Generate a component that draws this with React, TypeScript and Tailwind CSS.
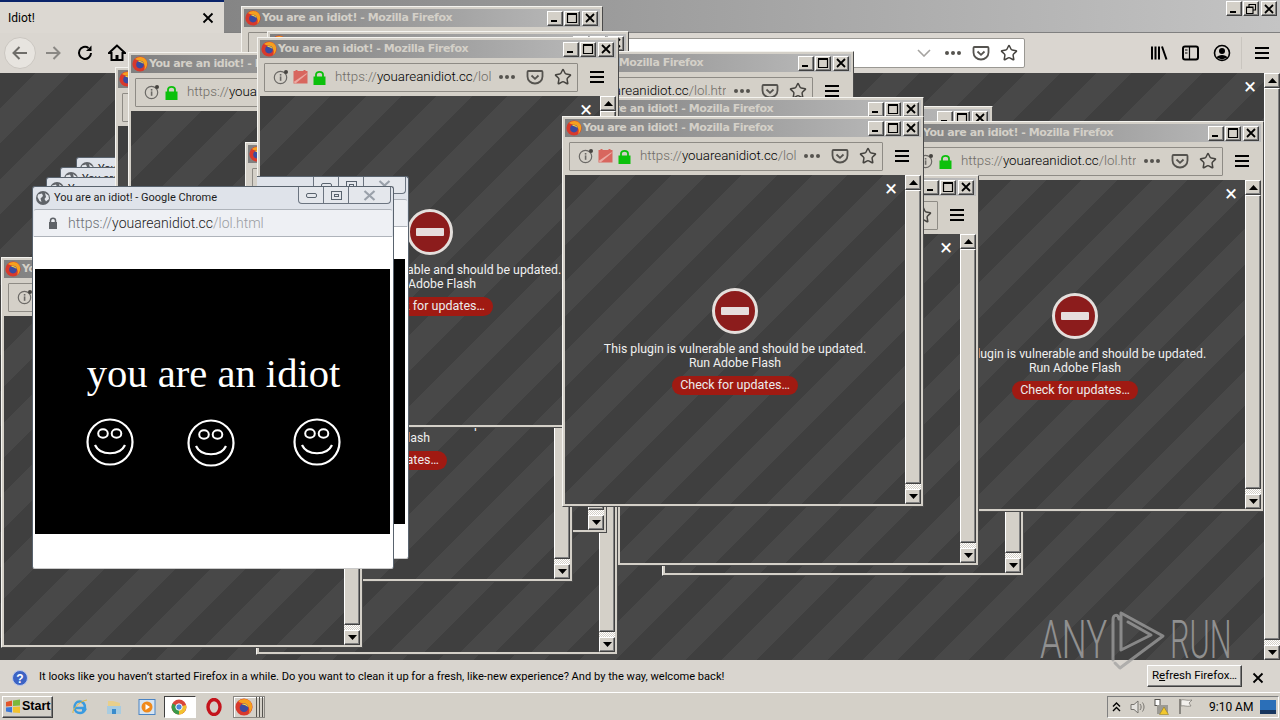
import { Star } from "lucide-react";

const stripes =
  "bg-[repeating-linear-gradient(135deg,#3f3f3f_0,#3f3f3f_25px,#484848_25px,#484848_50px)]";
const outset =
  "border border-t-white border-l-white border-r-[#404040] border-b-[#404040] bg-[#d4d0c8] shadow-[inset_-1px_-1px_0_#808080]";
const uiFont = "font-['Roboto','Open_Sans',sans-serif]";

function FirefoxIcon({ size = 16 }: { size?: number }) {
  return (
    <svg width={size} height={size} viewBox="0 0 16 16" className="shrink-0">
      <circle cx="8" cy="8" r="7.6" fill="#d8392c" />
      <path d="M3 3C6 0 12 0 14.5 4.5C16 8 15 12 12 14C14 10 12 6 8 5.5C6 4 4 4 3 3Z" fill="#f6a01e" />
      <circle cx="8" cy="8.6" r="3.8" fill="#3b4aa0" />
      <path d="M6 5.5C8 4.5 11 5.5 11.6 8C10.5 6.8 8 6 6 5.5Z" fill="#ffd43a" />
    </svg>
  );
}

function WinGlyph({ kind }: { kind: "min" | "max" | "close" | "restore" }) {
  return (
    <svg width="14" height="12" viewBox="0 0 14 12">
      {kind === "min" && <rect x="3" y="8" width="6" height="2" fill="#000" />}
      {kind === "max" && (
        <path d="M2.5 2.5H11.5V10.5H2.5Z M2 1.5H12" fill="none" stroke="#000" strokeWidth="1.2" />
      )}
      {kind === "close" && <path d="M3 2L11 10M11 2L3 10" stroke="#000" strokeWidth="1.8" />}
      {kind === "restore" && (
        <path d="M5 3.5V1.5H11.5V7H9M2.5 4H9V10.5H2.5Z M2.5 4.5H9" fill="none" stroke="#000" strokeWidth="1.1" />
      )}
    </svg>
  );
}

function WinButtons({ restore = false }: { restore?: boolean }) {
  return (
    <div className="flex gap-[1px]">
      <div className={`flex h-[15px] w-[16px] items-center justify-center ${outset}`}>
        <WinGlyph kind="min" />
      </div>
      <div className={`flex h-[15px] w-[16px] items-center justify-center ${outset}`}>
        <WinGlyph kind={restore ? "restore" : "max"} />
      </div>
      <div className={`ml-[1px] flex h-[15px] w-[16px] items-center justify-center ${outset}`}>
        <WinGlyph kind="close" />
      </div>
    </div>
  );
}

function Arrow({ down = false }: { down?: boolean }) {
  return (
    <div className={`flex h-[15px] w-[16px] shrink-0 items-center justify-center ${outset}`}>
      <svg width="9" height="5" viewBox="0 0 9 5">
        <path d={down ? "M0 0H9L4.5 5Z" : "M0 5H9L4.5 0Z"} fill="#000" />
      </svg>
    </div>
  );
}

function ScrollBar() {
  return (
    <div className="flex w-[16px] shrink-0 flex-col bg-[#d4d0c8]">
      <Arrow />
      <div className={`flex-1 ${outset}`} />
      <div className="h-[5px] shrink-0 bg-[repeating-conic-gradient(#ffffff_0_25%,#d4d0c8_0_50%)] bg-[length:2px_2px]" />
      <Arrow down />
    </div>
  );
}

function Pocket({ size = 18 }: { size?: number }) {
  return (
    <svg width={size} height={size} viewBox="0 0 18 18" className="shrink-0">
      <path
        d="M2.5 3H15.5C16 3 16.5 3.5 16.5 4V8.5C16.5 12.5 13 15.5 9 15.5C5 15.5 1.5 12.5 1.5 8.5V4C1.5 3.5 2 3 2.5 3Z"
        fill="none"
        stroke="#55534f"
        strokeWidth="1.8"
      />
      <path d="M5.5 7.5L9 10.8L12.5 7.5" fill="none" stroke="#55534f" strokeWidth="1.8" />
    </svg>
  );
}

function Dots() {
  return (
    <div className="flex shrink-0 gap-[2px]">
      <span className="h-[4px] w-[4px] rounded-full bg-[#55534f]" />
      <span className="h-[4px] w-[4px] rounded-full bg-[#55534f]" />
      <span className="h-[4px] w-[4px] rounded-full bg-[#55534f]" />
    </div>
  );
}

function MenuBars() {
  return (
    <div className="flex w-[14px] shrink-0 flex-col gap-[3px]">
      <span className="h-[2px] bg-black" />
      <span className="h-[2px] bg-black" />
      <span className="h-[2px] bg-black" />
    </div>
  );
}

function InfoIcon() {
  return (
    <svg width="16" height="16" viewBox="0 0 16 16" className="shrink-0">
      <circle cx="7.5" cy="8.5" r="6.2" fill="none" stroke="#6b6966" strokeWidth="1.2" />
      <rect x="6.8" y="7.4" width="1.6" height="4.4" fill="#6b6966" />
      <rect x="6.8" y="5" width="1.6" height="1.6" fill="#6b6966" />
      <circle cx="13" cy="3" r="2" fill="#45433f" />
    </svg>
  );
}

function TrackIcon() {
  return (
    <svg width="15" height="14" viewBox="0 0 15 14" className="shrink-0">
      <rect x="0.5" y="1" width="14" height="12.5" fill="#d8665e" />
      <path d="M0.5 12L13 3.5H14.5L2.5 13.5" fill="#eaa9a2" />
      <rect x="2.5" y="0" width="2" height="2" fill="#d8665e" />
      <rect x="10.5" y="0" width="2" height="2" fill="#d8665e" />
    </svg>
  );
}

function GreenLock() {
  return (
    <svg width="13" height="15" viewBox="0 0 13 15" className="shrink-0">
      <path d="M3 7V4.5C3 1 10 1 10 4.5V7" fill="none" stroke="#0cc00c" strokeWidth="1.8" />
      <rect x="0.5" y="6.5" width="12" height="8.5" fill="#0cc00c" />
    </svg>
  );
}

function UrlText({ end = "/lol.html" }: { end?: string }) {
  return (
    <span className="whitespace-nowrap">
      <span className="text-[#6f6c67]">https://</span>
      <span className="text-black">youareanidiot.cc</span>
      <span className="text-[#6f6c67]">{end}</span>
    </span>
  );
}

function FirefoxWindow({ className, tracker = false }: { className: string; tracker?: boolean }) {
  return (
    <div
      className={`absolute flex h-[391px] w-[362px] flex-col border border-t-[#f4f3ef] border-l-[#f4f3ef] border-r-[#4a4a4a] border-b-[#4a4a4a] bg-[#d4d0c8] p-[2px] ${className}`}
    >
      <div className="flex h-[18px] shrink-0 items-center bg-gradient-to-r from-[#808080] to-[#bdbdbd] pl-[1px] pr-[2px]">
        <FirefoxIcon />
        <span className="ml-[1px] font-['DejaVu_Sans',sans-serif] text-[11px] font-bold tracking-[-0.45px] whitespace-nowrap text-[#d4d0c8]">
          You are an idiot! - Mozilla Firefox
        </span>
        <div className="ml-auto">
          <WinButtons />
        </div>
      </div>
      <div className="flex h-[38px] shrink-0 items-center bg-[#d4d0c8] pl-[4px]">
        <div className="flex h-[29px] w-[314px] items-center rounded-[1px] border border-[#8e8b85] pl-[8px] pr-[5px]">
          <InfoIcon />
          {tracker && (
            <div className="ml-[4px]">
              <TrackIcon />
            </div>
          )}
          <div className="ml-[5px]">
            <GreenLock />
          </div>
          <div className={`ml-[9px] min-w-0 flex-1 overflow-hidden text-[13.3px] font-light ${uiFont}`}>
            <UrlText />
          </div>
          <div className="ml-[8px]">
            <Dots />
          </div>
          <div className="ml-[11px]">
            <Pocket />
          </div>
          <Star size={18} strokeWidth={2} className="ml-[10px] shrink-0 text-[#45433f]" />
        </div>
        <div className="ml-[12px]">
          <MenuBars />
        </div>
      </div>
      <div className="flex min-h-0 flex-1">
        <div className={`relative flex min-w-0 flex-1 flex-col items-center pt-[113px] ${stripes}`}>
          <span className="absolute top-[3px] right-[8px] text-[22px] leading-none text-white">×</span>
          <div className="flex h-[46px] w-[46px] items-center justify-center rounded-full border-[3px] border-[#e4dfdc] bg-[#8c1c1c]">
            <div className="h-[8px] w-[28px] rounded-[1px] bg-[#e6dcdc]" />
          </div>
          <div className={`mt-[8px] text-center text-[12.3px] leading-[14px] whitespace-nowrap text-[#f0f0f0] ${uiFont}`}>
            <div>This plugin is vulnerable and should be updated.</div>
            <div>Run Adobe Flash</div>
          </div>
          <div
            className={`mt-[6px] flex h-[19px] w-[126px] items-center justify-center rounded-full bg-[#a01a12] text-[12.5px] text-[#ececec] ${uiFont}`}
          >
            Check for updates…
          </div>
        </div>
        <ScrollBar />
      </div>
    </div>
  );
}

function GlobeIcon() {
  return (
    <svg width="14" height="14" viewBox="0 0 14 14" className="shrink-0">
      <circle cx="7" cy="7" r="7" fill="#5f6368" />
      <path d="M2 3.5L6 2.5L7 5L4.5 7.5L5.5 11L3.5 10L1.5 6Z M9 2L12.5 4.5L13 8L10 10.5L8.5 8L10 6Z" fill="#e2e5ea" />
    </svg>
  );
}

function Smiley({ className }: { className: string }) {
  return (
    <svg width="48" height="48" viewBox="0 0 48 48" className={className}>
      <circle cx="24" cy="24" r="22.5" fill="none" stroke="#fff" strokeWidth="2.2" />
      <ellipse cx="17" cy="15.5" rx="4.8" ry="4.2" fill="none" stroke="#fff" strokeWidth="2" />
      <ellipse cx="30.5" cy="15.5" rx="4.8" ry="4.2" fill="none" stroke="#fff" strokeWidth="2" />
      <path d="M9 27C14 38 34 38 39 27" fill="none" stroke="#fff" strokeWidth="2.2" />
    </svg>
  );
}

function ChromeWindow({ className }: { className: string }) {
  return (
    <div
      className={`absolute flex h-[383px] w-[362px] flex-col overflow-hidden rounded-[3px] border border-[#59636e] border-b-[#c9c9c9] bg-[#dfe3ea] ${className}`}
    >
      <div className="flex h-[22px] shrink-0 items-start pl-[3px]">
        <div className="mt-[4px]">
          <GlobeIcon />
        </div>
        <span className={`mt-[3px] ml-[4px] text-[11px] whitespace-nowrap text-[#1c1c1c] ${uiFont}`}>
          You are an idiot! - Google Chrome
        </span>
        <div className="mr-[2px] ml-auto flex h-[17px] rounded-b-[4px] border border-t-0 border-[#6b7480] bg-[#e4e7ec]">
          <div className="flex w-[25px] items-center justify-center border-r border-[#6b7480]">
            <span className="h-[5px] w-[11px] rounded-[2px] border border-[#59636e]" />
          </div>
          <div className="flex w-[25px] items-center justify-center border-r border-[#6b7480]">
            <span className="flex h-[9px] w-[11px] items-center justify-center border border-[#59636e]">
              <span className="h-[3px] w-[5px] border border-[#59636e]" />
            </span>
          </div>
          <div className="flex w-[41px] items-center justify-center">
            <svg width="13" height="11" viewBox="0 0 13 11">
              <path d="M1.5 1L11.5 10M11.5 1L1.5 10" stroke="#9aa1aa" strokeWidth="2.2" fill="none" />
            </svg>
          </div>
        </div>
      </div>
      <div className="mx-[1px] flex h-[28px] shrink-0 items-center rounded-t-[2px] border-y border-[#aeb3ba] bg-[#eef0f4] pl-[14px]">
        <svg width="10" height="12" viewBox="0 0 10 12" className="shrink-0">
          <path d="M2.5 6V3.5C2.5 0.5 7.5 0.5 7.5 3.5V6" fill="none" stroke="#5f6368" strokeWidth="1.5" />
          <rect x="1" y="5" width="8" height="7" fill="#5f6368" />
        </svg>
        <span className={`ml-[10px] whitespace-nowrap text-[14px] font-light ${uiFont}`}>
          <span className="text-[#6d7177]">https://</span>
          <span className="text-[#1c1c1c]">youareanidiot.cc</span>
          <span className="text-[#9a9da2]">/lol.html</span>
        </span>
      </div>
      <div className="flex min-h-0 flex-1 flex-col bg-white pt-[32px] pr-[3px] pb-[34px] pl-[2px]">
        <div className="flex min-h-0 flex-1 flex-col items-center bg-black">
          <div className="mt-[81px] pl-[2px] font-['Liberation_Serif',serif] text-[40.6px] leading-[48px] text-white">you are an idiot</div>
          <div className="relative mt-[20px] h-[48px] w-full">
            <Smiley className="absolute top-0 left-[51px]" />
            <Smiley className="absolute top-[1px] left-[152px]" />
            <Smiley className="absolute top-0 left-[258px]" />
          </div>
        </div>
      </div>
    </div>
  );
}

function QuickIcon({ children, className = "" }: { children: React.ReactNode; className?: string }) {
  return <div className={`flex h-[21px] items-center justify-center ${className}`}>{children}</div>;
}

export default function App() {
  return (
    <div className={`relative flex h-[720px] w-[1280px] flex-col overflow-hidden bg-[#d4d0c8] ${uiFont}`}>
      {/* main browser window */}
      <div className="flex h-[33px] shrink-0">
        <div className="flex w-[224px] items-center justify-between border-t-2 border-[#0a246a] bg-[#dcd8d2] pr-[10px] pl-[8px]">
          <span className="text-[12px] text-black">Idiot!</span>
          <svg width="12" height="12" viewBox="0 0 12 12">
            <path d="M1.5 1.5L10.5 10.5M10.5 1.5L1.5 10.5" stroke="#000" strokeWidth="1.8" />
          </svg>
        </div>
        <div className="flex flex-1 items-start justify-end border-b border-[#808080] bg-gradient-to-r from-[#858585] to-[#c4c4c4] pt-[1px] pr-[3px]">
          <WinButtons restore />
        </div>
      </div>
      <div className="flex h-[40px] shrink-0 items-center bg-[#dad6d0] pl-[4px]">
        <div className="flex h-[32px] w-[32px] items-center justify-center rounded-full border border-[#cbc7c1] bg-[#e7e4df]">
          <svg width="18" height="16" viewBox="0 0 18 16">
            <path d="M16 8H3M8.5 2L2.5 8L8.5 14" fill="none" stroke="#6f6d69" strokeWidth="2" />
          </svg>
        </div>
        <svg width="18" height="16" viewBox="0 0 18 16" className="ml-[8px]">
          <path d="M2 8H15M9.5 2L15.5 8L9.5 14" fill="none" stroke="#8a8884" strokeWidth="2" />
        </svg>
        <svg width="18" height="18" viewBox="0 0 18 18" className="ml-[14px]">
          <path d="M15 9A6 6 0 1 1 12.5 4" fill="none" stroke="#000" strokeWidth="2" />
          <path d="M15.5 1.5V7H10Z" fill="#000" />
        </svg>
        <svg width="18" height="18" viewBox="0 0 18 18" className="ml-[14px]">
          <path d="M9 1.5L1 9H3.5V16H14.5V9H17Z" fill="none" stroke="#000" strokeWidth="2" />
          <rect x="7.5" y="11" width="3" height="5" fill="#000" />
        </svg>
        <div className="ml-[125px] flex h-[30px] w-[774px] items-center justify-end rounded-[2px] border border-[#9a9893] bg-white pr-[6px]">
          <svg width="14" height="8" viewBox="0 0 14 8">
            <path d="M1 1L7 7L13 1" fill="none" stroke="#a5a3a0" strokeWidth="1.6" />
          </svg>
          <div className="ml-[14px]">
            <Dots />
          </div>
          <div className="ml-[11px]">
            <Pocket />
          </div>
          <Star size={18} strokeWidth={2} className="ml-[10px] text-[#45433f]" />
        </div>
        <div className="ml-[125px] flex items-center">
          <svg width="18" height="16" viewBox="0 0 18 16">
            <path d="M2 1.5V14.5M5.5 1.5V14.5M9 1.5V14.5M12 1.5L16.5 14.5" stroke="#000" strokeWidth="2" fill="none" />
          </svg>
          <svg width="18" height="16" viewBox="0 0 18 16" className="ml-[14px]">
            <rect x="1" y="1.5" width="15" height="13" rx="2" fill="none" stroke="#000" strokeWidth="2" />
            <path d="M7.5 2V14M3 5H5.5M3 8H5.5" stroke="#000" strokeWidth="1.2" />
          </svg>
          <svg width="18" height="18" viewBox="0 0 18 18" className="ml-[13px]">
            <circle cx="9" cy="9" r="7.5" fill="none" stroke="#000" strokeWidth="1.6" />
            <circle cx="9" cy="7" r="3" fill="#000" />
            <path d="M3.5 13.5C5 10 13 10 14.5 13.5L9 15.5Z" fill="#000" />
          </svg>
          <div className="ml-[10px] h-[32px] w-[1px] bg-[#c9c5bf]" />
          <div className="ml-[13px]">
            <MenuBars />
          </div>
        </div>
      </div>
      <div className={`relative flex min-h-0 flex-1 ${stripes}`}>
        <div className="relative flex-1">
          <span className="absolute top-[3px] right-[8px] text-[22px] leading-none text-white">×</span>
        </div>
        <ScrollBar />
      </div>

      {/* notification bar */}
      <div className="flex h-[33px] shrink-0 items-center border-b border-white bg-[#d9d5cf] pt-[3px] pl-[12px]">
        <svg width="16" height="16" viewBox="0 0 16 16">
          <circle cx="8" cy="8" r="7.5" fill="#3c63c4" stroke="#b9c7ea" />
          <text x="8" y="12.5" textAnchor="middle" fontSize="12" fontWeight="700" fill="#fff" fontFamily="Liberation Sans">?</text>
        </svg>
        <span className="ml-[11px] text-[11.1px] whitespace-nowrap text-black">
          It looks like you haven’t started Firefox in a while. Do you want to clean it up for a fresh, like-new experience? And by the way, welcome back!
        </span>
        <div className={`mb-[3px] ml-auto flex h-[22px] w-[95px] items-center justify-center text-[11.5px] ${outset} bg-[#e0ddd7]`}>
          <span>
            R<span className="underline">e</span>fresh Firefox…
          </span>
        </div>
        <svg width="12" height="12" viewBox="0 0 12 12" className="mr-[16px] ml-[10px]">
          <path d="M1.5 1.5L10.5 10.5M10.5 1.5L1.5 10.5" stroke="#000" strokeWidth="1.8" />
        </svg>
      </div>

      {/* taskbar */}
      <div className="flex h-[27px] shrink-0 items-center bg-[#d4d0c8] pl-[2px]">
        <div className={`flex h-[22px] w-[51px] items-center pl-[2px] ${outset}`}>
          <svg width="16" height="15" viewBox="0 0 16 15">
            <path d="M1 3L7 1.5V7L1 7.5Z" fill="#e2562b" />
            <path d="M8 1.5L15 0.5V6.5L8 7Z" fill="#7cb83c" />
            <path d="M1 8.5L7 8V13.5L1 12.5Z" fill="#3c78d8" />
            <path d="M8 8L15 7.5V14L8 13.5Z" fill="#f2c22e" />
          </svg>
          <span className="ml-[1px] font-['Liberation_Sans',sans-serif] text-[12.5px] font-bold text-black">Start</span>
        </div>
        <QuickIcon className="ml-[18px] w-[18px]">
          <svg width="18" height="18" viewBox="0 0 18 18">
            <path d="M4 10H14C14 5 11 3.5 8.5 3.5C5.5 3.5 3.5 6 3.5 9.5C3.5 13 6 15 9 15C11 15 13 14 14 12H11" fill="none" stroke="#3a9be0" strokeWidth="2.4" />
            <path d="M2 15C1 12 8 3 16 2" fill="none" stroke="#e0b83c" strokeWidth="1" />
          </svg>
        </QuickIcon>
        <QuickIcon className="ml-[16px] w-[18px]">
          <svg width="18" height="18" viewBox="0 0 18 18">
            <path d="M3 3H8L15 5V15H3Z" fill="#e8cf8a" />
            <rect x="2" y="8" width="14" height="8" fill="#a8cce0" />
            <rect x="7" y="11" width="4" height="5" fill="#3a8ccc" />
          </svg>
        </QuickIcon>
        <QuickIcon className="ml-[15px] w-[18px]">
          <svg width="18" height="18" viewBox="0 0 18 18">
            <rect x="1" y="1.5" width="16" height="15" fill="#d6e4f2" stroke="#4a84c4" />
            <circle cx="9" cy="9" r="5.5" fill="#f08a1c" />
            <path d="M7.5 6L12 9L7.5 12Z" fill="#fff" />
          </svg>
        </QuickIcon>
        <div className="ml-[8px] flex h-[22px] w-[32px] items-center justify-center border border-t-[#404040] border-l-[#404040] border-r-white border-b-white bg-white pr-[2px]">
          <svg width="16" height="16" viewBox="0 0 16 16">
            <circle cx="8" cy="8" r="7.5" fill="#d9463a" />
            <path d="M8 8L15 6A7.5 7.5 0 0 1 8 15.5Z" fill="#f2c230" />
            <path d="M8 8L8 15.5A7.5 7.5 0 0 1 1.5 4.5Z" fill="#3a9a4a" />
            <circle cx="8" cy="8" r="3.2" fill="#4a86dc" stroke="#fff" />
          </svg>
        </div>
        <QuickIcon className="ml-[9px] w-[18px]">
          <svg width="16" height="18" viewBox="0 0 16 18">
            <ellipse cx="8" cy="9" rx="6" ry="7.5" fill="none" stroke="#c4141c" strokeWidth="3.4" />
          </svg>
        </QuickIcon>
        <div className="ml-[10px] flex h-[22px] w-[32px] items-center border border-[#8a8782] bg-[#d4d0c8] pl-[1px] shadow-[inset_1px_1px_0_#fff]">
          <FirefoxIcon size={18} />
          <span className="ml-[3px] h-[20px] w-[1px] bg-[#55534f]" />
          <span className="ml-[2px] h-[20px] w-[1px] bg-[#55534f]" />
          <span className="ml-[2px] h-[20px] w-[1px] bg-[#55534f]" />
        </div>
        <div className="mr-[1px] ml-auto flex h-[22px] w-[172px] items-center border border-t-[#808080] border-l-[#808080] border-r-white border-b-white pl-[3px] text-[12px] text-black">
          <svg width="9" height="10" viewBox="0 0 9 10" className="ml-[1px] shrink-0">
            <path d="M1 4.5L4.5 1L8 4.5M1 9L4.5 5.5L8 9" fill="none" stroke="#000" strokeWidth="1.4" />
          </svg>
          <svg width="16" height="16" viewBox="0 0 16 16" className="ml-[9px] shrink-0">
            <path d="M1 5.5H4L8 2V14L4 10.5H1Z" fill="#e4e2de" stroke="#77746f" />
            <path d="M10 5C11.5 7 11.5 9 10 11M12.5 3.5C14.5 6.5 14.5 9.5 12.5 12.5" fill="none" stroke="#77746f" />
          </svg>
          <svg width="15" height="16" viewBox="0 0 15 16" className="ml-[8px] shrink-0">
            <rect x="1" y="0.5" width="5" height="6" fill="#fff" stroke="#55534f" />
            <rect x="3" y="6" width="11" height="9" fill="#9c9a94" />
            <path d="M10 8L14.5 15.5H5.5Z" fill="#f2c82e" stroke="#8a7414" strokeWidth="0.5" />
          </svg>
          <svg width="15" height="17" viewBox="0 0 15 17" className="ml-[9px] shrink-0">
            <path d="M2 1V16" stroke="#77746f" strokeWidth="1.6" />
            <path d="M3 2C6 1 8 3 14 2L11 5L13 8C8 9 6 7 3 8Z" fill="#f2f0ec" stroke="#77746f" strokeWidth="0.7" />
          </svg>
          <span className="ml-[16px] whitespace-nowrap">9:10 AM</span>
          <svg width="16" height="14" viewBox="0 0 16 14" className="mr-[2px] ml-auto shrink-0">
            <rect width="16" height="14" fill="#2b6fb8" />
            <rect y="10" width="16" height="4" fill="#17365e" />
          </svg>
        </div>
      </div>

      {/* pile of popup windows on the desktop */}
      <FirefoxWindow className="top-[6px] left-[241px]" />
      <FirefoxWindow className="top-[31px] left-[267px]" />
      <FirefoxWindow className="top-[51px] left-[492px]" />
      <FirefoxWindow className="top-[106px] left-[631px]" />
      <FirefoxWindow className="top-[185px] left-[662px]" />
      <FirefoxWindow className="top-[121px] left-[902px]" />
      <FirefoxWindow className="top-[175px] left-[617px]" />
      <FirefoxWindow className="top-[97px] left-[562px]" />
      <FirefoxWindow className="top-[264px] left-[256px]" />
      <ChromeWindow className="top-[157px] left-[76px]" />
      <ChromeWindow className="top-[167px] left-[60px]" />
      <ChromeWindow className="top-[177px] left-[46px]" />
      <FirefoxWindow className="top-[67px] left-[115px]" />
      <FirefoxWindow className="top-[52px] left-[128px]" />
      <FirefoxWindow className="top-[142px] left-[245px]" />
      <FirefoxWindow className="top-[191px] left-[211px]" />
      <FirefoxWindow className="top-[257px] left-[1px]" />
      <FirefoxWindow className="top-[37px] left-[257px]" tracker />
      <FirefoxWindow className="top-[116px] left-[562px]" tracker />
      <ChromeWindow className="top-[176px] left-[47px] [clip-path:inset(0_0_0_210px)]" />
      <ChromeWindow className="top-[186px] left-[32px]" />

      {/* watermark */}
      <div className="pointer-events-none absolute top-[608px] left-[1040px] flex h-[64px] items-center font-['Roboto',sans-serif] text-[53px] leading-none font-light text-[#909090]">
        <span className="w-[66px] origin-left scale-x-[0.66] whitespace-nowrap">ANY</span>
        <svg width="64" height="64" viewBox="0 0 64 64" className="shrink-0">
          <path
            d="M7 52V12C7 6 12 6 13 11M15 5L57 28L14 60L9 55M15 5V42L45 27L22 14"
            fill="none"
            stroke="#a0a0a0"
            strokeOpacity="0.75"
            strokeWidth="3"
            strokeLinecap="round"
            strokeLinejoin="round"
          />
        </svg>
        <span className="w-[60px] origin-left scale-x-[0.58] whitespace-nowrap">RUN</span>
      </div>
    </div>
  );
}
